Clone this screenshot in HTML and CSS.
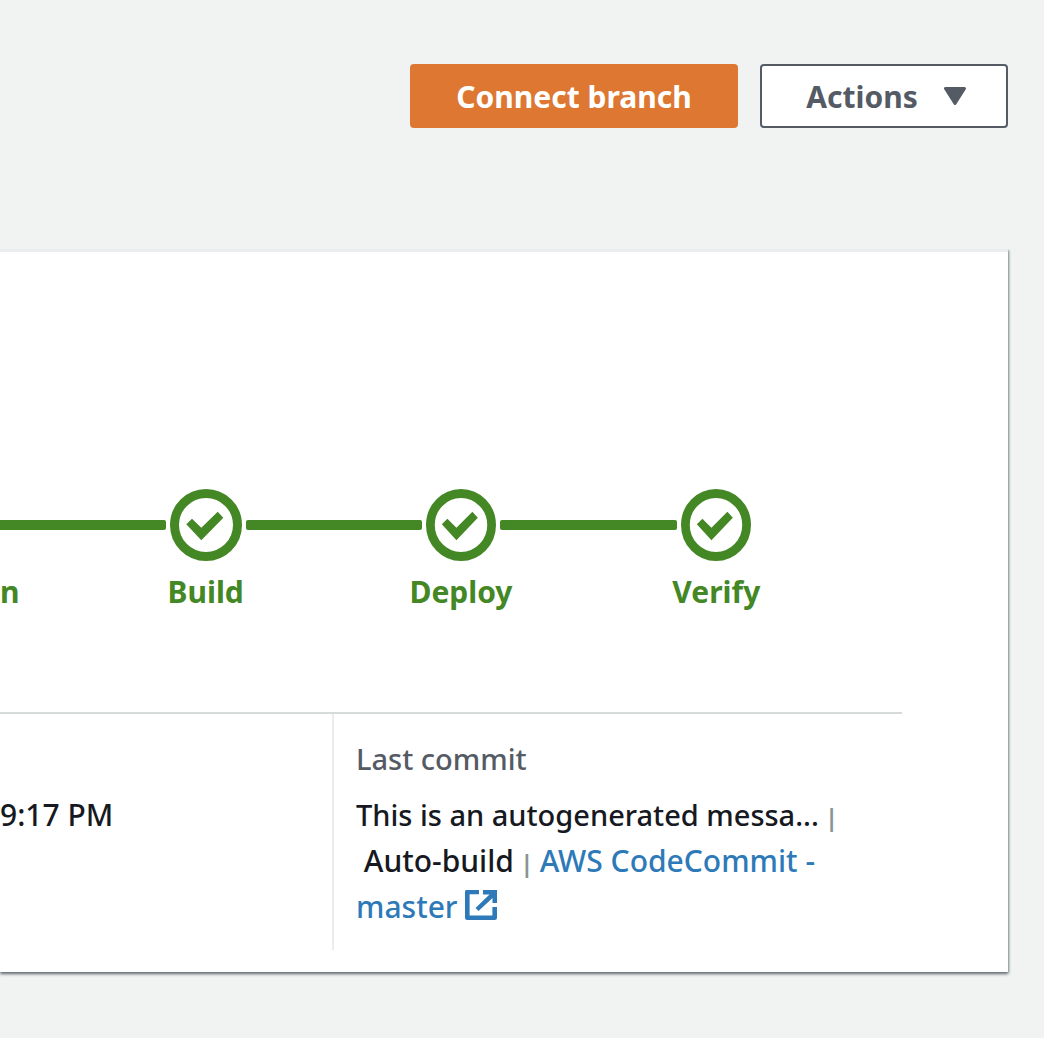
FILE: index.html
```html
<!DOCTYPE html>
<html lang="en">
<head>
<meta charset="utf-8">
<title>App branches</title>
<link rel="stylesheet" href="styles.css">
</head>
<body>
<svg class="defs" aria-hidden="true">
  <symbol id="check" viewBox="0 0 72 72" preserveAspectRatio="none">
    <circle cx="36" cy="36" r="31.5" fill="none" stroke="currentColor" stroke-width="9"/>
    <path d="M16.3 35.3 22 29.7 31.3 38.7 47.7 22.7 53.3 28.7 31.3 51.3Z" fill="currentColor"/>
  </symbol>
</svg>
<header class="toolbar">
  <button type="button" class="button button-primary">Connect branch</button>
  <button type="button" class="button button-normal">Actions
    <svg class="caret" viewBox="0 0 22 18" aria-hidden="true"><path d="M1.5 1.5H20.5L11 16.5Z" fill="currentColor" stroke="currentColor" stroke-width="3" stroke-linejoin="round"/></svg>
  </button>
</header>
<main class="card">
  <ol class="pipeline">
    <li class="step step-partial">
      <div class="track"><span class="line line-in"></span></div>
      <span class="label">n</span>
    </li>
    <li class="step">
      <div class="track"><span class="line line-in"></span><svg class="status status-wide" aria-hidden="true"><use href="#check"/></svg><span class="line line-out"></span></div>
      <span class="label">Build</span>
    </li>
    <li class="step">
      <div class="track"><span class="line line-in"></span><svg class="status" aria-hidden="true"><use href="#check"/></svg><span class="line line-out"></span></div>
      <span class="label">Deploy</span>
    </li>
    <li class="step">
      <div class="track"><span class="line line-in"></span><svg class="status" aria-hidden="true"><use href="#check"/></svg><span class="line line-end"></span></div>
      <span class="label">Verify</span>
    </li>
  </ol>
  <section class="details">
    <div class="time">9:17 PM</div>
    <div class="commit">
      <h2 class="heading">Last commit</h2>
      <p class="message"><span class="summary">This is an autogenerated messa...</span><span class="bar"> | </span><br>&nbsp;Auto-build<span class="bar"> | </span><a class="link" href="#">AWS CodeCommit -<br>master <svg class="external" viewBox="0 0 32 30" aria-hidden="true"><path d="M14 2H2.3V27.7H29.7V17" fill="none" stroke="currentColor" stroke-width="4.6" stroke-linejoin="round"/><path d="M18 0H32V13H27.5V8L13.5 21 10.5 18 24.5 4.5H18Z" fill="currentColor"/></svg></a></p>
    </div>
  </section>
</main>
</body>
</html>
```
FILE: styles.css
```css
* {
  box-sizing: border-box;
}

body {
  margin: 0;
  background: #f1f3f3;
  color: #16191f;
  font-family: "Noto Sans", "Open Sans", sans-serif;
  font-size: 30px;
  font-weight: 500;
  line-height: 46px;
}

.defs {
  display: none;
}

.toolbar {
  display: flex;
  justify-content: flex-end;
  gap: 22px;
  padding: 64px 36px 0 0;
}

.button {
  display: flex;
  align-items: center;
  justify-content: center;
  gap: 26px;
  height: 64px;
  padding: 2px 44px 0;
  border: 2px solid;
  border-radius: 4px;
  font: inherit;
  font-weight: 700;
}

.button-primary {
  min-width: 328px;
  border-color: #dd7732;
  background: #dd7732;
  color: #fff;
}

.button-normal {
  min-width: 248px;
  padding: 2px 40px 0 44px;
  border-color: #545b64;
  background: #fff;
  color: #545b64;
}

.caret {
  width: 22px;
  height: 18px;
  margin-bottom: 2px;
}

.card {
  margin: 121px 36px 66px 0;
  padding: 237px 0 22px;
  border-top: 3px solid #eaeded;
  background: #fff;
  box-shadow: 0 2px 3px #687078, 1px 1px 2px #aab7b8;
  clip-path: inset(0 -8px -8px 0);
}

.pipeline {
  display: flex;
  margin: 0;
  padding: 0 164px 0 0;
  list-style: none;
  color: #448725;
  font-weight: 700;
}

.step {
  flex: 1;
  text-align: center;
}

.step-partial {
  flex: 0 0 78px;
  text-align: left;
}

.track {
  display: flex;
  align-items: center;
  gap: 4px;
  height: 72px;
  margin-bottom: 8px;
}

.line {
  flex: 1;
  height: 10px;
  background: currentColor;
}

.line-in {
  border-radius: 0 2px 2px 0;
}

.step-partial .line-in {
  border-radius: 0;
}

.line-out {
  border-radius: 2px 0 0 2px;
}

.line-end {
  background: none;
}

.status {
  width: 70px;
  height: 72px;
}

.status-wide {
  width: 72px;
}

.details {
  display: grid;
  grid-template-columns: 332px 1fr;
  margin: 97px 106px 0 0;
  border-top: 2px solid #d5dbdb;
}

.time {
  padding-top: 78px;
}

.commit {
  padding: 22px 0 20px 22px;
  border-left: 2px solid #eaeded;
}

.heading {
  margin: 0 0 10px;
  color: #545b64;
  font-size: 29px;
  font-weight: 500;
}

.message {
  margin: 0;
}

.summary {
  font-size: 29px;
}

.bar {
  color: #879596;
  font-size: 24px;
  font-weight: 700;
  line-height: 24px;
}

.link {
  color: #2e7ab8;
  text-decoration: none;
}

.external {
  width: 32px;
  height: 30px;
  vertical-align: -2px;
}
```
